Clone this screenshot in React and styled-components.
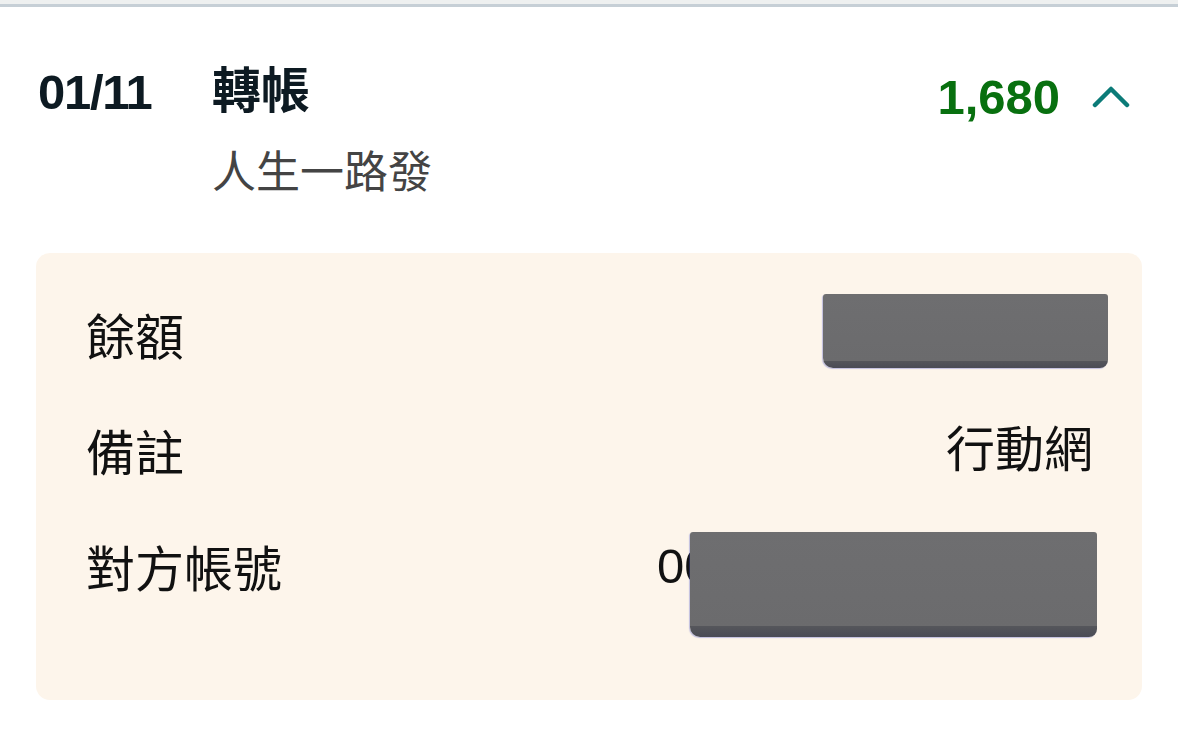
import React from 'react';
import styled, { createGlobalStyle } from 'styled-components';

const GlobalStyle = createGlobalStyle`
  html, body {
    margin: 0;
    padding: 0;
    background: #ffffff;
    font-family: "Liberation Sans", "Noto Sans CJK TC", Arial, sans-serif;
  }
`;

const Page = styled.div`
  width: 1178px;
  height: 733px;
  background: #ffffff;
  overflow: hidden;
`;

const TopRule = styled.div`
  height: 4px;
  background: #eef0f0;
  border-bottom: 3px solid #c6cfd6;
`;

const Header = styled.div`
  display: flex;
  align-items: flex-start;
  padding: 50px 48px 0 38px;
`;

const DateText = styled.div`
  width: 174px;
  flex-shrink: 0;
  margin-top: 5px;
  font-family: "Liberation Sans", Arial, sans-serif;
  font-size: 49px;
  font-weight: 700;
  line-height: 60px;
  letter-spacing: -1.3px;
  color: #0d1a22;
`;

const TitleBlock = styled.div`
  display: flex;
  flex-direction: column;
  flex: 1;
`;

const Title = styled.div`
  font-family: "Noto Sans CJK TC", sans-serif;
  font-size: 49px;
  font-weight: 700;
  line-height: 60px;
  color: #0d1a22;
`;

const Subtitle = styled.div`
  margin-top: 24px;
  font-family: "Noto Sans CJK TC", sans-serif;
  font-size: 44px;
  font-weight: 400;
  line-height: 56px;
  color: #444444;
`;

const AmountWrap = styled.div`
  display: flex;
  align-items: center;
  height: 80px;
`;

const Amount = styled.div`
  font-family: "Liberation Sans", Arial, sans-serif;
  font-size: 49px;
  font-weight: 700;
  line-height: 60px;
  color: #08700f;
`;

const Chevron = styled.svg`
  margin-left: 32px;
  display: block;
`;

const DetailCard = styled.div`
  margin: 56px 36px 0 36px;
  background: #fdf5eb;
  border-radius: 14px;
  padding: 52px 49px 105px 50px;
  display: flex;
  flex-direction: column;
  gap: 58px;
`;

const Row = styled.div`
  display: flex;
  justify-content: space-between;
  align-items: center;
  height: 58px;
`;

const Label = styled.div`
  font-family: "Noto Sans CJK TC", sans-serif;
  font-size: 49px;
  line-height: 58px;
  color: #111111;
`;

const Value = styled.div`
  position: relative;
  height: 58px;
  font-family: "Liberation Sans", "Noto Sans CJK TC", sans-serif;
  font-size: 49px;
  line-height: 58px;
  color: #111111;
`;

const Redacted = styled.div`
  position: absolute;
  top: ${p => p.$top}px;
  right: ${p => p.$right}px;
  width: ${p => p.$w}px;
  height: ${p => p.$h}px;
  background: linear-gradient(180deg, #6e6e70 0%, #6b6b6d 90%, #55565b 90%, #4a4b55 100%);
  border-radius: 3px 3px 8px 10px;
  box-shadow: -1px 1px 1px rgba(80, 90, 200, 0.35);
`;

const rows = [
  { label: '餘額', value: '', redact: { top: -11, right: -15, w: 285, h: 74 } },
  { label: '備註', value: '行動網' },
  { label: '對方帳號', value: '0000000000000000', redact: { top: -5, right: -4, w: 407, h: 105 } },
];

const App = () => (
  <Page>
    <GlobalStyle />
    <TopRule />
    <Header>
      <DateText>01/11</DateText>
      <TitleBlock>
        <Title>轉帳</Title>
        <Subtitle>人生一路發</Subtitle>
      </TitleBlock>
      <AmountWrap>
        <Amount>1,680</Amount>
        <Chevron width="38" height="24" viewBox="0 0 38 24">
          <polyline
            points="3,20 19,4 35,20"
            fill="none"
            stroke="#0b7b78"
            strokeWidth="4.5"
            strokeLinecap="round"
            strokeLinejoin="round"
          />
        </Chevron>
      </AmountWrap>
    </Header>
    <DetailCard>
      {rows.map(r => (
        <Row key={r.label}>
          <Label>{r.label}</Label>
          <Value>
            {r.value}
            {r.redact && (
              <Redacted
                $top={r.redact.top}
                $right={r.redact.right}
                $w={r.redact.w}
                $h={r.redact.h}
              />
            )}
          </Value>
        </Row>
      ))}
    </DetailCard>
  </Page>
);

export default App;
